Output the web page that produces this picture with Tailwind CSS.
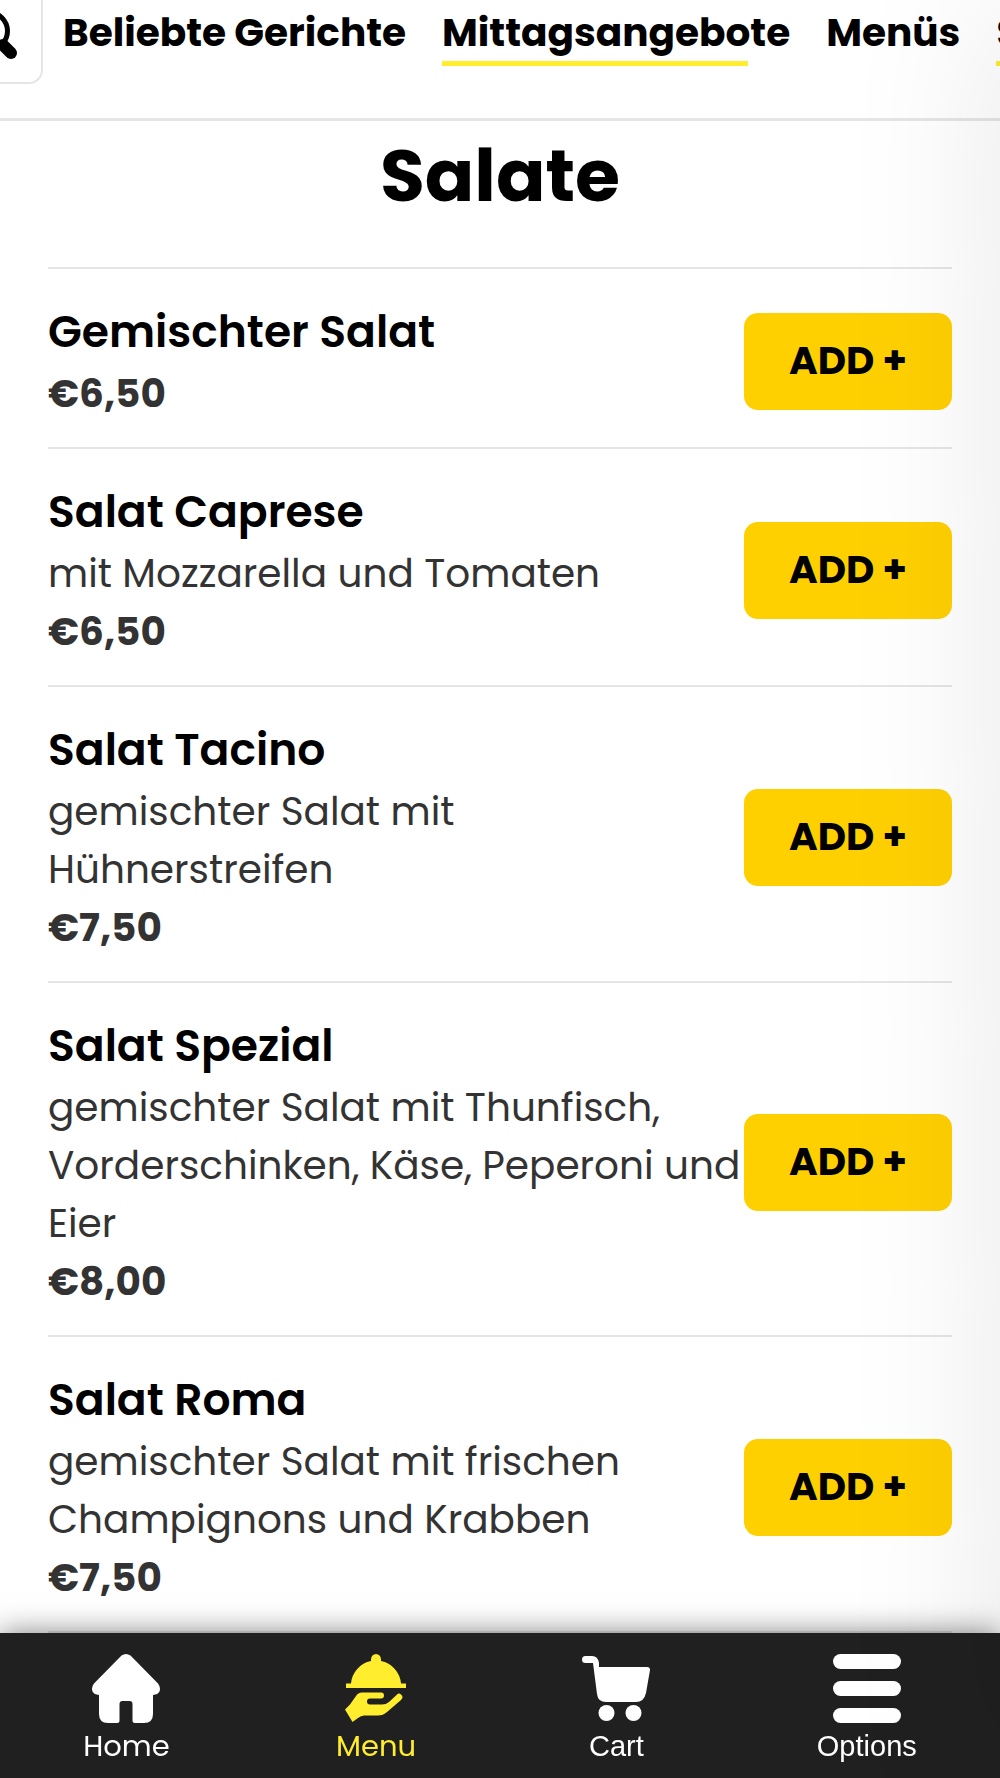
<!DOCTYPE html>
<html lang="de">

<head>
    <meta charset="UTF-8">
    <meta name="viewport" content="width=device-width, initial-scale=1.0">
    <script src="https://cdn.jsdelivr.net/npm/@tailwindcss/browser@4"></script>
    <title>Salate</title>
</head>

<body class="bg-white text-black font-[Poppins,Inter,sans-serif] overflow-x-hidden">
<!-- category bar -->
<header class="flex items-start h-[121px] border-b-3 border-[#e5e5e5] overflow-hidden">
    <button type="button" aria-label="Suche" class="shrink-0 w-[43px] h-[84px] flex items-start justify-end pt-[9px] pr-6 border-r-2 border-b-2 border-[#e5e5e5] rounded-br-[14px]">
        <svg class="shrink-0 w-[52px] h-[52px]" viewBox="0 0 52 52" fill="none" stroke="#000" aria-hidden="true">
            <circle cx="24" cy="22" r="18.500" stroke-width="5"/>
            <path d="M38 36l8 8" stroke-width="12" stroke-linecap="round"/>
        </svg>
    </button>
    <nav class="flex gap-9 pt-[5px] pl-5 text-[39px] leading-[56px] font-bold whitespace-nowrap">
        <a href="#beliebt">Beliebte Gerichte</a>
        <a href="#mittag">Mittagsangebote<span class="block w-[306px] h-[5px] bg-[#ffed2e]"></span></a>
        <a href="#menues">Menüs</a>
        <a href="#salate">Salate<span class="block h-[5px] bg-[#ffed2e]"></span></a>
    </nav>
</header>

<main class="px-12 pb-[145px]">
    <h1 class="pb-9 text-center text-[73px] leading-[110px] font-bold">Salate</h1>
    <ul class="border-t-2 border-[#e5e5e5] text-[39px] leading-[58px] text-[#333]">
        <li class="flex items-center justify-between pt-[30px] pb-6 border-b-2 border-[#e5e5e5]">
            <div class="whitespace-nowrap">
                <h2 class="text-[44px] leading-[66px] font-semibold text-black">Gemischter Salat</h2>
                <p class="font-bold">€6,50</p>
            </div>
            <button type="button" class="shrink-0 w-[208px] h-[97px] rounded-[14px] bg-[#ffd000] text-black font-bold">ADD +</button>
        </li>
        <li class="flex items-center justify-between pt-[30px] pb-6 border-b-2 border-[#e5e5e5]">
            <div class="whitespace-nowrap">
                <h2 class="text-[44px] leading-[66px] font-semibold text-black">Salat Caprese</h2>
                <p>mit Mozzarella und Tomaten</p>
                <p class="font-bold">€6,50</p>
            </div>
            <button type="button" class="shrink-0 w-[208px] h-[97px] rounded-[14px] bg-[#ffd000] text-black font-bold">ADD +</button>
        </li>
        <li class="flex items-center justify-between pt-[30px] pb-6 border-b-2 border-[#e5e5e5]">
            <div class="whitespace-nowrap">
                <h2 class="text-[44px] leading-[66px] font-semibold text-black">Salat Tacino</h2>
                <p>gemischter Salat mit<br>Hühnerstreifen</p>
                <p class="font-bold">€7,50</p>
            </div>
            <button type="button" class="shrink-0 w-[208px] h-[97px] rounded-[14px] bg-[#ffd000] text-black font-bold">ADD +</button>
        </li>
        <li class="flex items-center justify-between pt-[30px] pb-6 border-b-2 border-[#e5e5e5]">
            <div class="whitespace-nowrap">
                <h2 class="text-[44px] leading-[66px] font-semibold text-black">Salat Spezial</h2>
                <p>gemischter Salat mit Thunfisch,<br>Vorderschinken, Käse, Peperoni und<br>Eier</p>
                <p class="font-bold">€8,00</p>
            </div>
            <button type="button" class="shrink-0 w-[208px] h-[97px] rounded-[14px] bg-[#ffd000] text-black font-bold">ADD +</button>
        </li>
        <li class="flex items-center justify-between pt-[30px] pb-6 border-b-2 border-[#e5e5e5]">
            <div class="whitespace-nowrap">
                <h2 class="text-[44px] leading-[66px] font-semibold text-black">Salat Roma</h2>
                <p>gemischter Salat mit frischen<br>Champignons und Krabben</p>
                <p class="font-bold">€7,50</p>
            </div>
            <button type="button" class="shrink-0 w-[208px] h-[97px] rounded-[14px] bg-[#ffd000] text-black font-bold">ADD +</button>
        </li>
    </ul>
</main>

<!-- bottom navigation -->
<nav class="fixed bottom-0 inset-x-0 h-[145px] pt-[21px] flex items-start justify-around bg-[#202020] text-white text-[29px] leading-[46px] shadow-[0_0_28px_rgba(0,0,0,0.5)]">
    <a href="#home" class="flex flex-col items-center">
        <svg class="w-[68px] h-[69px]" viewBox="0 0 68 69" fill="currentColor" aria-hidden="true">
            <path d="M29.500 1.500Q34-1.500 38.500 1.500L66 29.500Q69 33.500 67.500 37.500Q66 40.500 61 41V60Q61 69 52 69H43Q40.500 69 40.500 66.500V50Q40.500 47 37.500 47H30.500Q27.500 47 27.500 50V66.500Q27.500 69 25 69H16Q7 69 7 60V41Q2 40.500 .5 37.500Q-1 33.500 2 29.500Z"/>
        </svg>
        Home
    </a>
    <a href="#menu" class="flex flex-col items-center text-[#ffed2e]">
        <svg class="w-[68px] h-[69px]" viewBox="0 0 68 69" fill="currentColor" aria-hidden="true">
            <path d="M29 7V5.500A5 5.500 0 0 1 39 5.500V7A25 25 0 0 1 59 29.500H64V34H4V29.500H9A25 25 0 0 1 29 7Z"/>
            <path d="M20 38.500H39A3 3 0 0 1 39 44.500H28A3 3 0 0 0 28 50.500H40Q44 50.500 47 48L54.500 41Q57 38.500 59 40.500Q62 43 59 46L45 58Q41 61.500 36 61.500H22Q19 61.500 16 64L10.500 68L3 55.500L8 50.500L14 42Q16 38.500 20 38.500Z"/>
        </svg>
        Menu
    </a>
    <a href="#cart" class="flex flex-col items-center font-[Arial,'Liberation_Sans',sans-serif]">
        <svg class="w-[68px] h-[69px]" viewBox="0 0 68 69" fill="currentColor" aria-hidden="true">
            <path d="M3.500 2H10Q16 2 17 9V13H65Q68 13 68 16L64 39Q62 48 54 48H24Q16 48 15 40L11 9H3.500A3.500 3.500 0 0 1 3.500 2Z"/>
            <circle cx="24.500" cy="59" r="8"/>
            <circle cx="51.500" cy="59" r="8"/>
        </svg>
        Cart
    </a>
    <a href="#options" class="flex flex-col items-center font-[Arial,'Liberation_Sans',sans-serif]">
        <svg class="w-[68px] h-[69px]" viewBox="0 0 68 69" fill="currentColor" aria-hidden="true">
            <rect width="68" height="15" rx="7.500"/>
            <rect y="27" width="68" height="15" rx="7.500"/>
            <rect y="54" width="68" height="15" rx="7.500"/>
        </svg>
        Options
    </a>
</nav>

<aside class="fixed inset-y-0 left-full w-80 pointer-events-none shadow-[0_0_160px_rgba(0,0,0,0.1)]"></aside>
</body>

</html>
